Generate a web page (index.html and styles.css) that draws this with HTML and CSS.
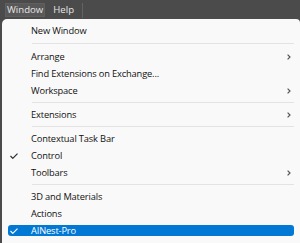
FILE: index.html
```html
<!DOCTYPE html>
<html lang="en">
  <head>
    <meta charset="UTF-8" />
    <title>Window Menu</title>
    <link rel="stylesheet" href="styles.css">
  </head>
  <body>
    <div class="menubar">
      <span class="menubar-item active">Window</span>
      <span class="menubar-item">Help</span>
      <span class="menubar-divider"></span>
    </div>

    <div class="menu">
      <div class="item"><span class="check"></span><span class="label">New Window</span></div>
      <div class="sep sep-wide"></div>
      <div class="item">
        <span class="check"></span><span class="label">Arrange</span>
        <svg class="arrow" width="4" height="6" viewBox="0 0 4 6"><polyline points="0.6,0.6 3,3 0.6,5.4" /></svg>
      </div>
      <div class="item"><span class="check"></span><span class="label">Find Extensions on Exchange...</span></div>
      <div class="item">
        <span class="check"></span><span class="label">Workspace</span>
        <svg class="arrow" width="4" height="6" viewBox="0 0 4 6"><polyline points="0.6,0.6 3,3 0.6,5.4" /></svg>
      </div>
      <div class="sep"></div>
      <div class="item">
        <span class="check"></span><span class="label">Extensions</span>
        <svg class="arrow" width="4" height="6" viewBox="0 0 4 6"><polyline points="0.6,0.6 3,3 0.6,5.4" /></svg>
      </div>
      <div class="sep"></div>
      <div class="item"><span class="check"></span><span class="label">Contextual Task Bar</span></div>
      <div class="item">
        <span class="check">
          <svg width="8" height="6" viewBox="0 0 8 6"><polyline points="0.5,3 2.8,5.3 7.5,0.6" /></svg>
        </span>
        <span class="label">Control</span>
      </div>
      <div class="item">
        <span class="check"></span><span class="label">Toolbars</span>
        <svg class="arrow" width="4" height="6" viewBox="0 0 4 6"><polyline points="0.6,0.6 3,3 0.6,5.4" /></svg>
      </div>
      <div class="sep"></div>
      <div class="item"><span class="check"></span><span class="label">3D and Materials</span></div>
      <div class="item"><span class="check"></span><span class="label">Actions</span></div>
      <div class="item selected">
        <span class="check">
          <svg width="8" height="6" viewBox="0 0 8 6"><polyline points="0.5,3 2.8,5.3 7.5,0.6" /></svg>
        </span>
        <span class="label">AINest-Pro</span>
      </div>
    </div>
  </body>
</html>
```

FILE: styles.css
```css
:root {
  --bar-bg: #4b4b4b;
  --menu-bg: #f9f9f9;
  --text: #111111;
  --accent: #0078d4;
  --sep: #e3e3e3;
}

* {
  margin: 0;
  padding: 0;
  box-sizing: border-box;
}

body {
  background: var(--bar-bg);
  font-family: "Open Sans", "Liberation Sans", sans-serif;
  height: 243px;
  overflow: hidden;
}

.menubar {
  height: 19px;
  display: flex;
  align-items: flex-start;
  padding: 3px 0 0 5px;
  gap: 6px;
}

.menubar-item {
  height: 14px;
  line-height: 14px;
  padding: 0 2px;
  font-size: 9.6px;
  color: #e6e6e6;
}

.menubar-item.active {
  background: #585858;
  box-shadow: inset 0 0 0 1px #5f5f5f;
}

.menubar-divider {
  width: 1px;
  height: 15px;
  background: #626262;
}

.menu {
  margin-left: 2px;
  height: 224px;
  background: var(--menu-bg);
  border-radius: 5px 4px 0 0;
  padding-top: 3px;
  display: flex;
  flex-direction: column;
}

.item {
  height: 11px;
  margin: 3px 6px;
  display: flex;
  align-items: center;
  border-radius: 3px;
  font-size: 9.3px;
  color: var(--text);
}

.check {
  width: 23px;
  padding-left: 2px;
  display: flex;
  align-items: center;
}

.check polyline,
.arrow polyline {
  fill: none;
  stroke: #2a2a2a;
  stroke-width: 1.2;
}

.label {
  flex: 1;
  line-height: 11px;
  letter-spacing: -0.15px;
}

.arrow {
  margin-right: 3px;
}

.arrow polyline {
  stroke: #555;
}

.item.selected {
  background: var(--accent);
  color: #fff;
}

.item.selected polyline {
  stroke: #fff;
}

.sep {
  height: 1px;
  background: var(--sep);
  margin: 3px 6px 3px 30px;
}

.sep.sep-wide {
  margin-top: 4px;
  margin-bottom: 4px;
}
```
